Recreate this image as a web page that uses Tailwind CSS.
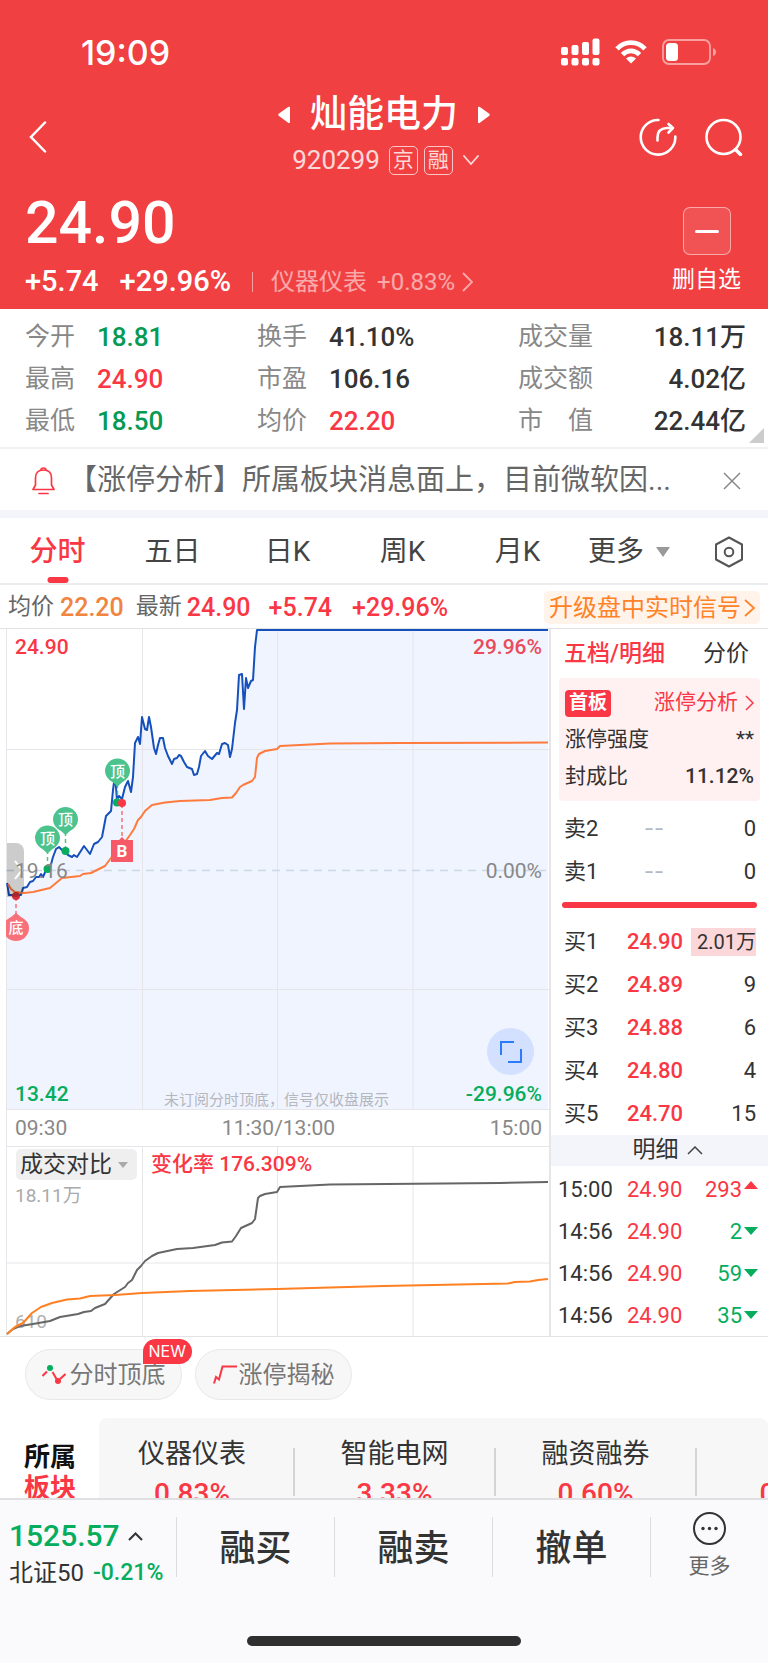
<!DOCTYPE html>
<html lang="zh-CN">
  <head>
    <meta charset="UTF-8" />
    <meta name="viewport" content="width=device-width, initial-scale=1.0" />
    <title>灿能电力 920299</title>
    <script src="https://cdn.jsdelivr.net/npm/@tailwindcss/browser@4"></script>
  </head>
  <body
    class="flex h-screen flex-col overflow-hidden bg-white font-['Roboto','Noto_Sans_CJK_SC',sans-serif] text-[#333]"
  >
    <!-- Header -->
    <header class="shrink-0 bg-[#f04042] pt-8 text-white">
      <!-- Status bar -->
      <div class="flex h-10 items-center justify-between pr-[51px] pl-[81px]">
        <span class="font-['Inter',sans-serif] text-[34px] font-medium">19:09</span>
        <div class="flex items-center gap-[15px]">
          <svg class="h-7 w-[39px]" viewBox="0 0 39 28" fill="currentColor">
            <rect x="0" y="9" width="7" height="8" rx="2" />
            <rect x="10.500" y="7" width="7" height="10" rx="2" />
            <rect x="21" y="4" width="7" height="13" rx="2" />
            <rect x="31.500" y="0.500" width="7" height="16.500" rx="2" />
            <rect x="0" y="20" width="7" height="7.500" rx="2" />
            <rect x="10.500" y="20" width="7" height="7.500" rx="2" />
            <rect x="21" y="20" width="7" height="7.500" rx="2" />
            <rect x="31.500" y="20" width="7" height="7.500" rx="2" />
          </svg>
          <svg class="h-6 w-8" viewBox="0 0 32 24" fill="none" stroke="currentColor" stroke-width="4.800">
            <path d="M2 8.800Q8 2.600 16 2.600T30 8.800" />
            <path d="M7.500 14.600Q11.200 10.800 16 10.800T24.500 14.600" />
            <path d="M11 18.600Q16 14.600 21 18.600L16 23.600Z" fill="currentColor" stroke="none" />
          </svg>
          <svg class="h-[26px] w-[55px]" viewBox="0 0 55 26">
            <rect x="1" y="1" width="47" height="24" rx="6" fill="none" stroke="#f8a0a0" stroke-width="1.800" />
            <rect x="4" y="4" width="12" height="18" rx="3.500" fill="#fff" />
            <path d="M51 9q3 1 3 4t-3 4z" fill="#f8a0a0" />
          </svg>
        </div>
      </div>

      <!-- Title bar -->
      <nav class="mt-[23px] grid grid-cols-[1fr_auto_1fr] items-center px-[25px]">
        <button type="button" aria-label="返回" class="w-6 pt-1 pl-1">
          <svg class="h-8 w-[18px]" viewBox="0 0 18 32" fill="none" stroke="currentColor" stroke-width="2.500" stroke-linecap="round">
            <path d="M16 1.500 2 16l14 14.500" />
          </svg>
        </button>
        <div class="flex flex-col items-center gap-[10px]">
          <div class="flex items-center gap-5">
            <button type="button" aria-label="上一只">
              <svg class="h-[18px] w-3" viewBox="0 0 12 18" fill="currentColor">
                <path d="M10.500.8 1 7.500q-1.500 1.300 0 2.600l9.500 7q1.500.6 1.500-1V2q0-1.800-1.500-1.200z" />
              </svg>
            </button>
            <h1 class="text-[37px] leading-10 font-medium">灿能电力</h1>
            <button type="button" aria-label="下一只">
              <svg class="h-[18px] w-3" viewBox="0 0 12 18" fill="currentColor">
                <path d="M1.500.8 11 7.500q1.500 1.300 0 2.600l-9.500 7Q0 17.700 0 16V2Q0 .2 1.500.8z" />
              </svg>
            </button>
          </div>
          <div class="flex h-[30px] items-center pl-[3px] text-white/80">
            <span class="text-[26px]">920299</span>
            <span class="ml-[9px] flex size-[29px] items-center justify-center rounded-[5px] border border-white/70 text-[21px] leading-none">京</span>
            <span class="ml-[6px] flex size-[29px] items-center justify-center rounded-[5px] border border-white/70 text-[21px] leading-none">融</span>
            <svg class="ml-[10px] h-[10px] w-4" viewBox="0 0 16 10" fill="none" stroke="currentColor" stroke-width="1.800" stroke-linecap="round">
              <path d="m1 1 7 8 7-8" />
            </svg>
          </div>
        </div>
        <div class="flex justify-end gap-7 pt-1">
          <button type="button" aria-label="分享">
            <svg class="size-[38px]" viewBox="0 0 38 38" fill="none" stroke="currentColor" stroke-width="2.600" stroke-linecap="round" stroke-linejoin="round">
              <path d="M19.500 2A17.300 17.300 0 1 0 36.300 18.500" />
              <path d="M18.500 22.500v-3q0-9 9-9.500h6M29.500 6l4.500 4-4.500 4.500" />
            </svg>
          </button>
          <button type="button" aria-label="搜索">
            <svg class="size-[38px]" viewBox="0 0 38 38" fill="none" stroke="currentColor" stroke-width="2.600" stroke-linecap="round">
              <circle cx="18.500" cy="19" r="17" />
              <path d="m30.500 31.500 5 5" stroke-width="3.500" />
            </svg>
          </button>
        </div>
      </nav>

      <!-- Price -->
      <div class="flex justify-between pt-5 pr-[27px] pb-[11px] pl-[25px]">
        <div>
          <p class="text-[59px] leading-[56px] font-medium">24.90</p>
          <div class="mt-[15px] flex h-8 items-center">
            <span class="text-[29px] font-medium">+5.74</span>
            <span class="ml-[21px] text-[29px] font-medium">+29.96%</span>
            <span class="ml-[21px] h-5 w-px bg-white/50"></span>
            <a href="#" class="ml-[18px] flex items-center text-[24px] text-white/55">
              仪器仪表
              <span class="ml-[10px]">+0.83%</span>
              <svg class="ml-[7px] h-5 w-[11px]" viewBox="0 0 11 20" fill="none" stroke="currentColor" stroke-width="1.800">
                <path d="m1 1 9 9-9 9" />
              </svg>
            </a>
          </div>
        </div>
        <button type="button" class="flex flex-col items-center pt-3">
          <span class="flex size-12 items-center justify-center rounded-[7px] border border-white/50 bg-white/10">
            <span class="h-[3px] w-6 rounded-full bg-white"></span>
          </span>
          <span class="mt-[9px] text-[23px] leading-8">删自选</span>
        </button>
      </div>
    </header>

    <!-- Scrolling content -->
    <main class="min-h-0 flex-1 overflow-y-auto [scrollbar-width:none]">
      <!-- Key figures -->
      <section class="relative grid grid-cols-[232fr_261fr_228fr] border-b-2 border-[#f1f1f4] pt-[7px] pr-[22px] pb-[5px] pl-[25px] text-[26px] leading-[42px]">
        <dl class="grid grid-cols-[auto_1fr] gap-x-[22px] font-medium">
          <dt class="text-[25px] font-normal text-[#888]">今开</dt>
          <dd class="text-[#069a54]">18.81</dd>
          <dt class="text-[25px] font-normal text-[#888]">最高</dt>
          <dd class="text-[#fa3744]">24.90</dd>
          <dt class="text-[25px] font-normal text-[#888]">最低</dt>
          <dd class="text-[#069a54]">18.50</dd>
        </dl>
        <dl class="grid grid-cols-[auto_1fr] gap-x-[22px] font-medium">
          <dt class="text-[25px] font-normal text-[#888]">换手</dt>
          <dd>41.10%</dd>
          <dt class="text-[25px] font-normal text-[#888]">市盈</dt>
          <dd>106.16</dd>
          <dt class="text-[25px] font-normal text-[#888]">均价</dt>
          <dd class="text-[#fa3744]">22.20</dd>
        </dl>
        <dl class="grid grid-cols-[auto_1fr] font-medium">
          <dt class="text-[25px] font-normal text-[#888]">成交量</dt>
          <dd class="text-right">18.11万</dd>
          <dt class="text-[25px] font-normal text-[#888]">成交额</dt>
          <dd class="text-right">4.02亿</dd>
          <dt class="text-[25px] font-normal text-[#888]">市　值</dt>
          <dd class="text-right">22.44亿</dd>
        </dl>
        <svg class="absolute right-1 bottom-1 size-[15px]" viewBox="0 0 15 15" fill="#ccc"><path d="M15 0v15H0z" /></svg>
      </section>

      <!-- Notice -->
      <div class="flex h-[61px] items-center pt-[2px] pr-[27px] pl-8">
        <svg class="h-7 w-[23px] shrink-0" viewBox="0 0 23 28" fill="none" stroke="#fa3744" stroke-width="1.700" stroke-linecap="round" stroke-linejoin="round">
          <path d="M9 3q0-2 2.500-2T14 3M3.500 18v-7q0-8 8-8t8 8v7l2.500 4.500H1z" />
          <path d="M7 26.500h9" />
        </svg>
        <p class="ml-[13px] flex-1 text-[29px] whitespace-nowrap text-[#666]">【涨停分析】所属板块消息面上，目前微软因...</p>
        <button type="button" aria-label="关闭">
          <svg class="size-[18px]" viewBox="0 0 18 18" stroke="#888" stroke-width="1.500"><path d="m1 1 16 16M17 1 1 17" /></svg>
        </button>
      </div>
      <div class="h-2 bg-[#f3f5fa]"></div>

      <!-- Period tabs -->
      <nav class="flex h-[67px] border-b-2 border-[#ececef] text-[28px] text-[#444]">
        <button type="button" class="relative flex-[115] pt-[2px] font-medium text-[#fa3744]">
          分时
          <span class="absolute bottom-0 left-1/2 h-[6px] w-[21px] -translate-x-1/2 rounded-full bg-[#fa3744]"></span>
        </button>
        <button type="button" class="flex-[115] pt-[2px]">五日</button>
        <button type="button" class="flex-[115] pt-[2px]">日K</button>
        <button type="button" class="flex-[115] pt-[2px]">周K</button>
        <button type="button" class="flex-[115] pt-[2px]">月K</button>
        <div class="flex flex-[156] items-center justify-between pt-[2px] pr-6 pl-[13px]">
          <button type="button" class="flex items-center gap-3">
            更多
            <svg class="h-[10px] w-[14px]" viewBox="0 0 14 10" fill="#999"><path d="M0 0h14L7 10z" /></svg>
          </button>
          <button type="button" aria-label="设置">
            <svg class="h-8 w-[30px]" viewBox="0 0 30 32" fill="none" stroke="#555" stroke-width="2" stroke-linejoin="round">
              <path d="M15 1.500 28 8.500v15l-13 7-13-7v-15z" />
              <circle cx="15" cy="16" r="4.300" />
            </svg>
          </button>
        </div>
      </nav>

      <!-- Latest figures -->
      <div class="flex h-[43px] items-center px-2 pt-[2px] text-[25px] font-medium text-[#fa3744]">
        <span class="text-[23px] font-normal text-[#666]">均价</span>
        <span class="ml-[6px] text-[#f08441]">22.20</span>
        <span class="ml-3 text-[23px] font-normal text-[#666]">最新</span>
        <span class="ml-[5px]">24.90</span>
        <span class="ml-[18px]">+5.74</span>
        <span class="ml-5">+29.96%</span>
        <a href="#" class="ml-auto flex h-[33px] items-center gap-[3px] rounded-[5px] bg-[#fff3ea] px-[5px] text-[24px] font-normal text-[#ff8227]">
          升级盘中实时信号
          <svg class="h-[18px] w-[11px]" viewBox="0 0 11 18" fill="none" stroke="currentColor" stroke-width="1.800"><path d="m1 1 9 8-9 8" /></svg>
        </a>
      </div>

      <div class="flex border-y border-[#e3e3e6]">
        <!-- Charts -->
        <div class="min-w-0 flex-1 border-r-2 border-[#e6e6ea] pl-[6px] text-[21px] text-[#888]">
          <div class="relative">
            <svg class="block w-full" viewBox="6 629 543 481" fill="none">
              <path
                fill="#eff4ff"
                d="M7 883 9 895H21L23 888 27 887 30 882 33 881 36 877 39 877 41 874 43 877 46 870 50 868 53 857 56 849 59 847 63 851 68 855 72 857 74 855 77 857 84 846 90 854 94 844 98 842 102 837 106 816 111 811 113 790 115 775 117 800 119 796 122 799 125 787 128 781 131 792 133 777 135 743 138 737 140 744 142 717 145 729 147 730 149 717 151 727 154 748 156 754 158 745 160 738 163 738 165 748 168 756 172 764 174 759 177 758 179 755 181 756 184 762 187 767 192 769 194 775 197 774 199 767 201 756 205 751 208 756 212 759 217 753 219 754 222 744 225 743 228 745 230 757 232 749 235 723 237 710 239 675 242 674 244 709 246 678 248 688 251 681 253 680 255 647 257 630H548V1110H7Z"
              />
              <path stroke="#e6e6ea" d="M6.500 629v481M142.500 629v481M277.500 629v481M413 629v481M6 749.500h543M6 989.500h543M6 1109.500h543" />
              <path stroke="#ccd8e6" stroke-width="1.500" stroke-dasharray="8 6" d="M6 870.500h543" />
              <g stroke-width="2" stroke-linejoin="round">
                <path
                  stroke="#1550bd"
                  d="M7 883 9 895H21L23 888 27 887 30 882 33 881 36 877 39 877 41 874 43 877 46 870 50 868 53 857 56 849 59 847 63 851 68 855 72 857 74 855 77 857 84 846 90 854 94 844 98 842 102 837 106 816 111 811 113 790 115 775 117 800 119 796 122 799 125 787 128 781 131 792 133 777 135 743 138 737 140 744 142 717 145 729 147 730 149 717 151 727 154 748 156 754 158 745 160 738 163 738 165 748 168 756 172 764 174 759 177 758 179 755 181 756 184 762 187 767 192 769 194 775 197 774 199 767 201 756 205 751 208 756 212 759 217 753 219 754 222 744 225 743 228 745 230 757 232 749 235 723 237 710 239 675 242 674 244 709 246 678 248 688 251 681 253 680 255 647 257 630H548"
                />
                <path
                  stroke="#ff7a3d"
                  d="M8 884 11 889 15 892 24 893 33 892 50 888 56 883 62 878 80 876 83 874 91 873 105 866 111 858 117 848 125 842 130 835 134 829 138 820 141 817 145 811 152 805 165 802.500 180 801 210 800 222 798 232 797.500 236 793 240 787 243 785 252 781 255 777 257 758 259 754 265 751 277 749 280 746 300 745 330 743.500 400 743 548 742.500"
                />
              </g>
              <!-- Signal markers -->
              <g stroke="#4cc38d" stroke-width="1.500" stroke-dasharray="4 3">
                <path d="M47.500 850v18M65.500 832v18M117.500 784v18" />
                <path stroke="#f7707a" d="M122 804v35M16 897v18" />
              </g>
              <g fill="#06ad5c">
                <circle cx="47.500" cy="869" r="4" />
                <circle cx="65.500" cy="851" r="4" />
                <circle cx="117" cy="802.500" r="4" />
              </g>
              <circle cx="122" cy="803" r="4" fill="#fa3744" />
              <circle cx="16" cy="896" r="4" fill="#d62f3a" />
              <g fill="#4cc38d">
                <path d="M35 838a12.500 12.500 0 1 1 25 0q0 7-8 11.500l-4.500 4-4.500-4q-8-4.500-8-11.500z" />
                <path d="M53 819.500a12.500 12.500 0 1 1 25 0q0 7-8 11.500l-4.500 4-4.500-4q-8-4.500-8-11.500z" />
                <path d="M105 771a12.500 12.500 0 1 1 25 0q0 7-8 11.500l-4.500 4-4.500-4q-8-4.500-8-11.500z" />
              </g>
              <path fill="#f7707a" d="M3 928a13 13 0 0 0 26 0q0-7-8-11l-5-4-5 4q-8 4-8 11z" />
              <path fill="#f65a68" d="M111 840h8l3-3 3 3h8v22h-22z" />
              <g fill="#fff" text-anchor="middle" class="text-[15px] font-medium">
                <text x="47.500" y="843.500">顶</text>
                <text x="65.500" y="825">顶</text>
                <text x="117.500" y="776.500">顶</text>
                <text x="16" y="933">底</text>
                <text x="122" y="857" class="text-[17px] font-bold">B</text>
              </g>
            </svg>
            <span class="absolute top-1 left-[9px] leading-7 font-medium text-[#fa3744]">24.90</span>
            <span class="absolute top-1 right-[7px] leading-7 font-medium text-[#ea4a5a]">29.96%</span>
            <button type="button" aria-label="展开" class="absolute top-[214px] left-px flex h-[54px] w-[17px] items-center justify-end rounded-r-lg bg-black/20">
              <svg class="h-5 w-3" viewBox="0 0 12 20" fill="none" stroke="#fff" stroke-width="2"><path d="m3 1 7 9-7 9" /></svg>
            </button>
            <span class="absolute top-[228px] left-[9px] leading-7">19.16</span>
            <span class="absolute top-[228px] right-[7px] leading-7">0.00%</span>
            <span class="absolute bottom-[2px] left-[9px] leading-7 font-medium text-[#06ad5c]">13.42</span>
            <span class="absolute right-[7px] bottom-[2px] leading-7 font-medium text-[#06ad5c]">-29.96%</span>
            <span class="absolute bottom-0 left-[158px] text-[15px] leading-5 whitespace-nowrap text-[#b5b7bd]">未订阅分时顶底，信号仅收盘展示</span>
            <button type="button" aria-label="全屏" class="absolute right-[15px] bottom-[35px] flex size-[47px] items-center justify-center rounded-full bg-[#d3e0ff]">
              <svg class="size-[22px]" viewBox="0 0 22 22" fill="none" stroke="#2b7bff" stroke-width="2"><path d="M1 14V1h13M21 8v13H8" /></svg>
            </button>
          </div>

          <div class="grid h-9 grid-cols-3 items-center border-l border-[#e6e6ea] pt-[2px] pr-[7px] pl-2">
            <span>09:30</span>
            <span class="text-center">11:30/13:00</span>
            <span class="text-right">15:00</span>
          </div>

          <div class="relative">
            <svg class="block w-full" viewBox="6 1146 543 190" fill="none">
              <path stroke="#e6e6ea" d="M6.500 1146v190M142.500 1146v190M277.500 1146v190M413 1146v190M6 1146.500h543M6 1263h543" />
            </svg>
            <span class="absolute bottom-[2px] left-[9px] text-[19px] leading-6 text-[#b0b0b0]">610</span>
            <svg class="absolute inset-0 w-full" viewBox="6 1146 543 190" fill="none" stroke-width="2" stroke-linejoin="round">
              <path
                stroke="#666"
                d="M7 1334 13 1329 20 1326 33 1324 50 1321 60 1317 78 1314 84 1312 91 1311 95 1308 105 1304 114 1294 125 1287 128 1283 132 1280 137 1270 141 1266 145 1261 152 1256 158 1253 177 1249 193 1248 215 1245 222 1242.500 232 1241.500 236 1236 241 1228 252 1223 255 1219 258 1198 260 1196 265 1194 277 1192 280 1187 300 1186 330 1184.500 500 1183 548 1182"
              />
              <path
                stroke="#ff8022"
                d="M7 1334 15 1327 23 1323 32 1313 41 1307 52 1303 67 1299.500 80 1298.500 90 1296 115 1295 142 1293 190 1291 277 1289 330 1287.500 384 1286 508 1283.500 515 1282 530 1281.500 538 1280 548 1279"
              />
            </svg>
            <div class="absolute top-[3px] left-[10px] flex items-center gap-[14px]">
              <button type="button" class="flex h-[31px] items-center gap-[6px] rounded-[5px] bg-[#efeff0] pr-[9px] pl-1 text-[23px] text-[#333]">
                成交对比
                <svg class="h-[6px] w-[10px]" viewBox="0 0 10 6" fill="#aaa"><path d="M0 0h10L5 6z" /></svg>
              </button>
              <span class="font-medium text-[#fa3744]">变化率 176.309%</span>
            </div>
            <span class="absolute top-9 left-[9px] text-[19px] leading-7 text-[#aaa]">18.11万</span>
          </div>
        </div>

        <!-- Order book -->
        <aside class="w-[217px] shrink-0 text-[22px]">
          <div class="flex h-[49px] items-center justify-between pt-[2px] pr-[19px] pl-[13px] text-[23px]">
            <button type="button" class="font-medium text-[#fa3744]">五档/明细</button>
            <button type="button">分价</button>
          </div>
          <div class="mx-2 rounded-[4px] bg-[#fff0f1] px-[6px] pt-[7px] pb-[6px] text-[21px]">
            <div class="flex h-9 items-center justify-between">
              <span class="flex h-[27px] items-center rounded-[4px] bg-[#fa3744] px-1 text-[19px] font-bold text-white">首板</span>
              <a href="#" class="flex items-center gap-[7px] text-[#fa3744]">
                涨停分析
                <svg class="h-4 w-[9px]" viewBox="0 0 9 16" fill="none" stroke="currentColor" stroke-width="1.500"><path d="m1 1 7 7-7 7" /></svg>
              </a>
            </div>
            <div class="flex h-[37px] items-center justify-between">
              <span>涨停强度</span><span>**</span>
            </div>
            <div class="flex h-[37px] items-center justify-between">
              <span>封成比</span><span class="font-medium">11.12%</span>
            </div>
          </div>

          <table class="mt-[6px] w-full">
            <tr class="h-[43px]">
              <td class="pl-[13px]">卖2</td>
              <td class="w-[64px] text-center font-['Inter',sans-serif] text-[#b4bac4]">--</td>
              <td class="w-[82px] pr-3 text-right">0</td>
            </tr>
            <tr class="h-[43px]">
              <td class="pl-[13px]">卖1</td>
              <td class="text-center font-['Inter',sans-serif] text-[#b4bac4]">--</td>
              <td class="pr-3 text-right">0</td>
            </tr>
          </table>
          <div class="mx-[11px] mt-[9px] mb-3 h-[6px] rounded-full bg-[#fa3744]"></div>
          <table class="w-full">
            <tr class="h-[43px]">
              <td class="pl-[13px]">买1</td>
              <td class="w-[58px] font-medium text-[#fa3744]">24.90</td>
              <td class="w-[83px] pr-3 text-right text-[20px]">
                <span class="inline-block bg-[#fcd7da] pl-[6px] leading-7">2.01万</span>
              </td>
            </tr>
            <tr class="h-[43px]">
              <td class="pl-[13px]">买2</td>
              <td class="font-medium text-[#fa3744]">24.89</td>
              <td class="pr-3 text-right">9</td>
            </tr>
            <tr class="h-[43px]">
              <td class="pl-[13px]">买3</td>
              <td class="font-medium text-[#fa3744]">24.88</td>
              <td class="pr-3 text-right">6</td>
            </tr>
            <tr class="h-[43px]">
              <td class="pl-[13px]">买4</td>
              <td class="font-medium text-[#fa3744]">24.80</td>
              <td class="pr-3 text-right">4</td>
            </tr>
            <tr class="h-[43px]">
              <td class="pl-[13px]">买5</td>
              <td class="font-medium text-[#fa3744]">24.70</td>
              <td class="pr-3 text-right">15</td>
            </tr>
          </table>

          <!-- Trades -->
          <button type="button" class="flex h-[31px] w-full items-center justify-center gap-2 bg-[#f3f5fa] pl-4 text-[23px]">
            明细
            <svg class="h-[9px] w-4" viewBox="0 0 16 9" fill="none" stroke="#444" stroke-width="1.500"><path d="m1 8 7-7 7 7" /></svg>
          </button>
          <table class="mt-[2px] w-full">
            <tr class="h-[42px]">
              <td class="pl-[7px]">15:00</td>
              <td class="w-[58px] text-[#fa3744]">24.90</td>
              <td class="w-[83px] pr-[10px]">
                <span class="flex items-center justify-end gap-[2px] text-[#fa3744]">293
                  <svg class="mb-2 h-2 w-[14px]" viewBox="0 0 14 8" fill="currentColor"><path d="M0 8h14L7 0z" /></svg>
                </span>
              </td>
            </tr>
            <tr class="h-[42px]">
              <td class="pl-[7px]">14:56</td>
              <td class="text-[#fa3744]">24.90</td>
              <td class="pr-[10px]">
                <span class="flex items-center justify-end gap-[2px] text-[#06ad5c]">2
                  <svg class="h-2 w-[14px]" viewBox="0 0 14 8" fill="currentColor"><path d="M0 0h14L7 8z" /></svg>
                </span>
              </td>
            </tr>
            <tr class="h-[42px]">
              <td class="pl-[7px]">14:56</td>
              <td class="text-[#fa3744]">24.90</td>
              <td class="pr-[10px]">
                <span class="flex items-center justify-end gap-[2px] text-[#06ad5c]">59
                  <svg class="h-2 w-[14px]" viewBox="0 0 14 8" fill="currentColor"><path d="M0 0h14L7 8z" /></svg>
                </span>
              </td>
            </tr>
            <tr class="h-[42px]">
              <td class="pl-[7px]">14:56</td>
              <td class="text-[#fa3744]">24.90</td>
              <td class="pr-[10px]">
                <span class="flex items-center justify-end gap-[2px] text-[#06ad5c]">35
                  <svg class="h-2 w-[14px]" viewBox="0 0 14 8" fill="currentColor"><path d="M0 0h14L7 8z" /></svg>
                </span>
              </td>
            </tr>
          </table>
        </aside>
      </div>

      <!-- Shortcuts -->
      <div class="flex gap-[13px] pt-3 pl-[25px] text-[24px] text-[#777]">
        <button type="button" class="relative flex h-[51px] w-[157px] items-center justify-center gap-1 rounded-full border border-[#e8e8e8] bg-[#f7f7f7]">
          <svg class="h-[19px] w-6" viewBox="0 0 24 19" fill="none" stroke="#fa3744" stroke-width="2">
            <path d="M.5 11 5 6.500M10.500 7l4 7M18 14l5.500-5" />
            <circle cx="8" cy="3" r="3" fill="#06ad5c" stroke="none" />
            <circle cx="16" cy="16" r="3" fill="#fa3744" stroke="none" />
          </svg>
          分时顶底
          <span class="absolute -top-[11px] -right-[11px] rounded-full rounded-bl-none bg-[#fa3744] px-[6px] font-['Inter',sans-serif] text-[16px] leading-[25px] text-white">NEW</span>
        </button>
        <button type="button" class="flex h-[51px] w-[157px] items-center justify-center gap-[2px] rounded-full border border-[#e8e8e8] bg-[#f7f7f7]">
          <svg class="h-[19px] w-6" viewBox="0 0 24 19" fill="none" stroke="#fa3744" stroke-width="2"><path d="M1 18.500 3 12l3 2.500L9.500 1.500H24" /></svg>
          涨停揭秘
        </button>
      </div>

      <!-- Sectors -->
      <section class="mt-[18px] flex h-[110px] overflow-hidden">
        <h2 class="w-[99px] shrink-0 pt-6 pl-6 text-[26px] leading-[31px] font-bold text-[#111]">
          所属<br /><span class="text-[#fa3744]">板块</span>
        </h2>
        <ul class="flex flex-1 overflow-hidden rounded-t-lg bg-[#f7f7f7] pt-[30px] text-center text-[27px] leading-10">
          <li class="h-12 w-[196px] shrink-0 border-r-2 border-[#d5d5d5] pr-2">
            <a href="#" class="-mt-[14px] block">仪器仪表<br /><span class="text-[28px] font-medium text-[#fa3744]">0.83%</span></a>
          </li>
          <li class="h-12 w-[201px] shrink-0 border-r-2 border-[#d5d5d5]">
            <a href="#" class="-mt-[14px] block">智能电网<br /><span class="text-[28px] font-medium text-[#fa3744]">3.33%</span></a>
          </li>
          <li class="h-12 w-[201px] shrink-0 border-r-2 border-[#d5d5d5]">
            <a href="#" class="-mt-[14px] block">融资融券<br /><span class="text-[28px] font-medium text-[#fa3744]">0.60%</span></a>
          </li>
          <li class="h-12 w-[201px] shrink-0">
            <a href="#" class="-mt-[14px] block"><br /><span class="text-[28px] font-medium text-[#fa3744]">0.45%</span></a>
          </li>
        </ul>
      </section>
    </main>

    <!-- Trade bar -->
    <footer class="shrink-0 border-t-2 border-[#e0e0e3] bg-[#fafafc] pb-[17px]">
      <div class="grid h-[119px] grid-cols-[176fr_158fr_158fr_158fr_118fr] items-start pt-[17px]">
        <a href="#" class="pt-[7px] pl-[9px]">
          <span class="flex items-center gap-2 text-[30px] leading-6 font-medium text-[#06ad5c]">
            1525.57
            <svg class="h-[9px] w-[15px]" viewBox="0 0 15 9" fill="none" stroke="#333" stroke-width="2"><path d="m1 8 6.500-6.500L14 8" /></svg>
          </span>
          <span class="mt-[13px] flex items-center gap-[9px] text-[24px] leading-6 whitespace-nowrap">
            北证50 <span class="text-[23px] font-medium text-[#06ad5c]">-0.21%</span>
          </span>
        </a>
        <button type="button" class="h-[60px] border-l border-[#dcdcdf] pt-1 text-[36px] font-medium">融买</button>
        <button type="button" class="h-[60px] border-l border-[#dcdcdf] pt-1 text-[36px] font-medium">融卖</button>
        <button type="button" class="h-[60px] border-l border-[#dcdcdf] pt-1 text-[36px] font-medium">撤单</button>
        <button type="button" class="flex h-[60px] flex-col items-center border-l border-[#dcdcdf] text-[21px]">
          <svg class="-mt-[5px] size-[33px] shrink-0" viewBox="0 0 33 33" fill="none" stroke="#333" stroke-width="2">
            <circle cx="16.500" cy="16.500" r="15.500" />
            <g fill="#333" stroke="none">
              <circle cx="10" cy="16.500" r="1.700" />
              <circle cx="16.500" cy="16.500" r="1.700" />
              <circle cx="23" cy="16.500" r="1.700" />
            </g>
          </svg>
          <span class="mt-[9px] leading-6 text-[#666]">更多</span>
        </button>
      </div>
      <div class="mx-auto mt-[17px] h-[10px] w-[274px] rounded-full bg-[#2f2f2f]"></div>
    </footer>
  </body>
</html>
